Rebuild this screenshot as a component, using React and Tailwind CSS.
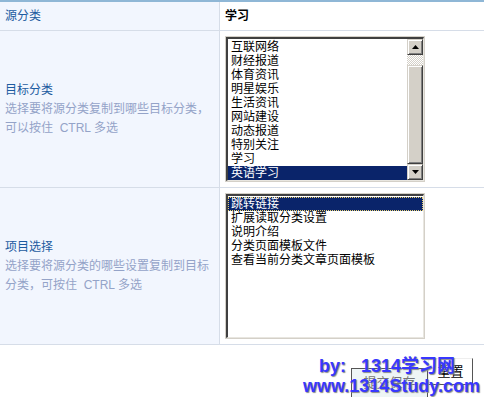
const targets = [
  "互联网络",
  "财经报道",
  "体育资讯",
  "明星娱乐",
  "生活资讯",
  "网站建设",
  "动态报道",
  "特别关注",
  "学习",
  "英语学习",
];

const options = [
  "跳转链接",
  "扩展读取分类设置",
  "说明介绍",
  "分类页面模板文件",
  "查看当前分类文章页面模板",
];

function Arrow({ down }) {
  return (
    <svg width="7" height="4" viewBox="0 0 7 4">
      <polygon points={down ? "0,0 7,0 3.5,4" : "0,4 7,4 3.5,0"} fill="#000" />
    </svg>
  );
}

function ScrollButton({ down }) {
  return (
    <div className="flex h-[16px] items-center justify-center border border-t-[#d4d0c8] border-l-[#d4d0c8] border-b-[#404040] border-r-[#404040] bg-[#d4d0c8] shadow-[inset_1px_1px_0_#fff,inset_-1px_-1px_0_#808080]">
      <Arrow down={down} />
    </div>
  );
}

function ListBox({ items, selected, focused, scroll, height }) {
  return (
    <div
      className="w-[200px] border border-[#d4d0c8] bg-white"
      style={{ height }}
    >
      <div className="flex h-full border-t-2 border-l-2 border-t-[#404040] border-l-[#404040] border-b border-r border-b-[#e8e6e0] border-r-[#e8e6e0]">
        <div className="flex-1 pt-px text-[12px] leading-[14px] text-black">
          {items.map((item, i) => (
            <div
              key={item}
              className={
                i === selected
                  ? focused
                    ? "border border-dotted border-[#e8d070] bg-[#0a246a] pl-[2px] leading-[12px] text-white"
                    : "bg-[#0a246a] pl-[3px] text-white"
                  : "pl-[3px]"
              }
            >
              {item}
            </div>
          ))}
        </div>
        {scroll && (
          <div className="flex w-[16px] flex-col">
            <ScrollButton />
            <div className="h-[10px] bg-[repeating-conic-gradient(#d4d0c8_0_25%,#fff_0_50%)] bg-[length:2px_2px]" />
            <div className="flex-1 border border-t-[#d4d0c8] border-l-[#d4d0c8] border-b-[#404040] border-r-[#404040] bg-[#d4d0c8] shadow-[inset_1px_1px_0_#fff,inset_-1px_-1px_0_#808080]" />
            <ScrollButton down />
          </div>
        )}
      </div>
    </div>
  );
}

function Label({ title, lines }) {
  return (
    <div className="flex w-[220px] flex-col justify-center border-r border-[#d6dde8] bg-[#f2f6fe] pl-[5px] text-[12px] leading-[19px]">
      <div className="text-[#1d5ba0]">{title}</div>
      {lines.map((l) => (
        <div key={l} className="whitespace-pre text-[#94a3c8]">
          {l}
        </div>
      ))}
    </div>
  );
}

export default function App() {
  return (
    <div
      className="relative h-[397px] w-[484px] overflow-hidden border-t-2 border-[#8fb7d6] bg-white"
      style={{ fontFamily: '"Liberation Sans", "Noto Sans CJK SC", sans-serif' }}
    >
      <div className="flex h-[29px] border-b border-[#d6dde8]">
        <div className="flex w-[220px] items-center border-r border-[#d6dde8] bg-[#f2f6fe] pl-[5px] text-[12px] text-[#1d5ba0]">
          源分类
        </div>
        <div className="flex flex-1 items-center pl-[5px] text-[12px] font-bold text-black">
          学习
        </div>
      </div>

      <div className="flex h-[157px] border-b border-[#d6dde8]">
        <Label
          title="目标分类"
          lines={["选择要将源分类复制到哪些目标分类，", "可以按住  CTRL 多选"]}
        />
        <div className="flex-1 py-[5px] pl-[5px]">
          <ListBox items={targets} selected={9} scroll height={146} />
        </div>
      </div>

      <div className="flex h-[157px] border-b border-[#d6dde8]">
        <Label
          title="项目选择"
          lines={["选择要将源分类的哪些设置复制到目标", "分类，可按住  CTRL 多选"]}
        />
        <div className="flex-1 py-[5px] pl-[5px]">
          <ListBox items={options} selected={0} focused height={146} />
        </div>
      </div>

      <div className="flex items-start justify-end pr-[11px] pt-[13px]">
        <button className="mt-[10px] h-[30px] w-[77px] border border-[#555] bg-[#eef5f5] text-[13px] text-[#777]">
          提交保存
        </button>
        <button className="h-[27px] w-[45px] border border-t-[#eee] border-l-[#eee] border-b-[#555] border-r-[#555] bg-white text-[13px] text-black">
          重置
        </button>
      </div>

      <div className="absolute left-[303px] top-[354px] text-[18px] font-bold leading-[20px] text-[#3838ff] [text-shadow:1px_1px_1px_#8a8a8a]">
        <div className="ml-[16px] whitespace-pre">by:   1314学习网</div>
        <div>www.1314Study.com</div>
      </div>
    </div>
  );
}
